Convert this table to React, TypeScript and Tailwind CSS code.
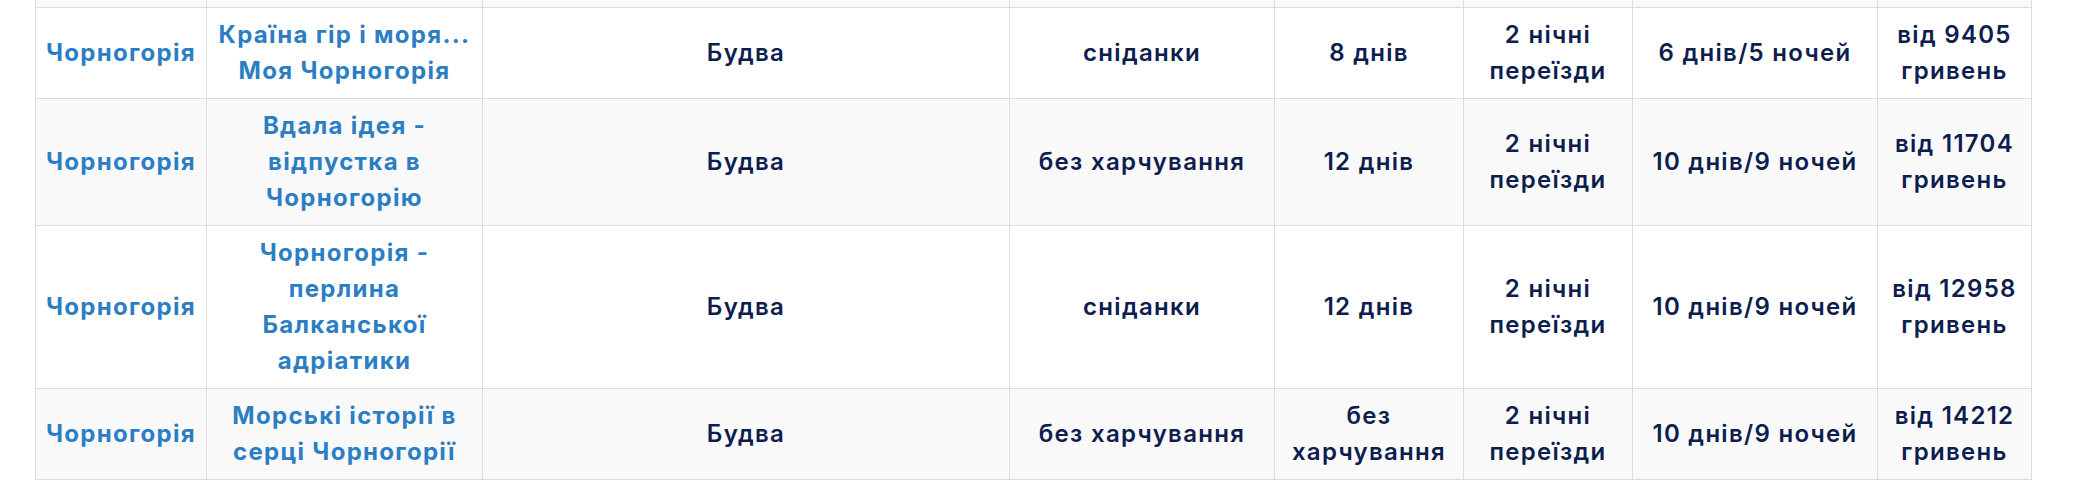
const rows = [
  {
    country: "Чорногорія",
    tour: "Країна гір і моря... Моя Чорногорія",
    city: "Будва",
    meals: "сніданки",
    days: "8 днів",
    transfer: "2 нічні переїзди",
    stay: "6 днів/5 ночей",
    price: "від 9405 гривень",
  },
  {
    country: "Чорногорія",
    tour: "Вдала ідея - відпустка в Чорногорію",
    city: "Будва",
    meals: "без харчування",
    days: "12 днів",
    transfer: "2 нічні переїзди",
    stay: "10 днів/9 ночей",
    price: "від 11704 гривень",
  },
  {
    country: "Чорногорія",
    tour: "Чорногорія - перлина Балканської адріатики",
    city: "Будва",
    meals: "сніданки",
    days: "12 днів",
    transfer: "2 нічні переїзди",
    stay: "10 днів/9 ночей",
    price: "від 12958 гривень",
  },
  {
    country: "Чорногорія",
    tour: "Морські історії в серці Чорногорії",
    city: "Будва",
    meals: "без харчування",
    days: "без харчування",
    transfer: "2 нічні переїзди",
    stay: "10 днів/9 ночей",
    price: "від 14212 гривень",
  },
];

const widths = [171, 276, 527, 265, 189, 169, 245, 154];

const cell =
  "border border-[#dddddd] px-[10px] py-[9px] text-center align-middle leading-[36px]";
const dark = `${cell} text-[#0d1d4e] font-semibold`;
const link = `${cell} text-[#2b7ec3] font-bold`;

export default function App() {
  return (
    <div
      className="min-h-screen bg-white pl-[35px] text-[24px] tracking-[1.3px]"
      style={{ fontFamily: "Inter, 'Noto Sans', sans-serif" }}
    >
      <table className="table-fixed border-collapse w-[1997px]">
        <colgroup>
          {widths.map((w, i) => (
            <col key={i} style={{ width: w }} />
          ))}
        </colgroup>
        <tbody>
          {/* tail of the previous row */}
          <tr className="bg-[#f9f9f9] h-[7px]">
            {widths.map((_, i) => (
              <td key={i} className="border border-t-0 border-[#dddddd] p-0" />
            ))}
          </tr>
          {rows.map((r, i) => (
            <tr key={i} className={i % 2 === 0 ? "bg-white" : "bg-[#f9f9f9]"}>
              <td className={link}>{r.country}</td>
              <td className={link}>{r.tour}</td>
              <td className={dark}>{r.city}</td>
              <td className={dark}>{r.meals}</td>
              <td className={dark}>{r.days}</td>
              <td className={dark}>{r.transfer}</td>
              <td className={dark}>{r.stay}</td>
              <td className={dark}>{r.price}</td>
            </tr>
          ))}
        </tbody>
      </table>
    </div>
  );
}
